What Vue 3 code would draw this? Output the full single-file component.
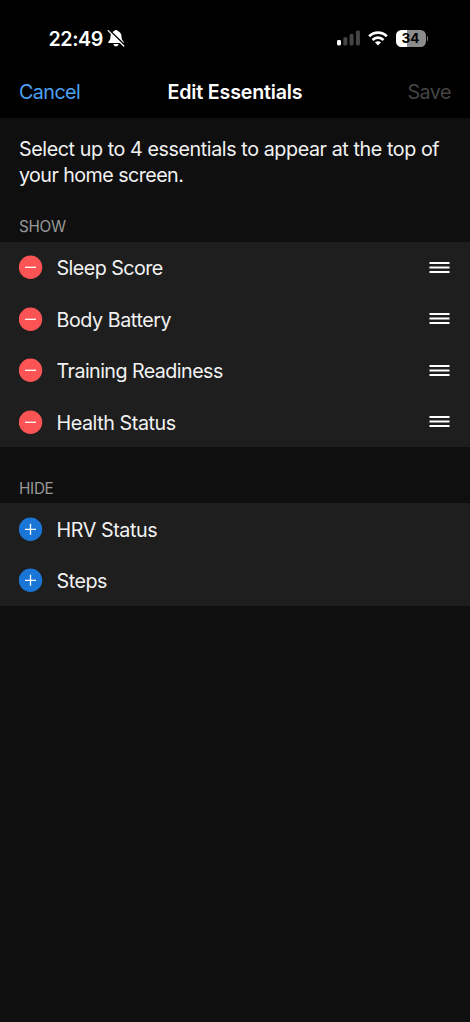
<script setup>
const shown = [
  { name: 'Sleep Score', tracking: -0.55 },
  { name: 'Body Battery', tracking: -0.43 },
  { name: 'Training Readiness', tracking: -0.56 },
  { name: 'Health Status', tracking: -0.42 },
]
const hidden = [
  { name: 'HRV Status', tracking: -0.4 },
  { name: 'Steps', tracking: -0.45 },
]
</script>

<template>
  <div class="screen">
    <header class="top">
      <div class="status">
        <div class="clock">
          <span class="time">22:49</span>
          <svg class="bell" width="18" height="18" viewBox="0 0 18 18">
            <path d="M9 .9c-.9 0-1.500.5-1.700 1.200C4.900 2.900 3.600 4.800 3.500 7.300c-.1 3-.7 3.900-1.900 5.100-.7.8-.4 1.700.6 1.700h13.600c1 0 1.300-.9.6-1.700-1.200-1.200-1.800-2.100-1.900-5.100-.1-2.500-1.400-4.400-3.800-5.200C10.500 1.400 9.900.9 9 .9z" fill="#fff" />
            <path d="M6.400 14.900h5.200c-.2 1.500-1.300 2.400-2.600 2.400s-2.400-.9-2.600-2.400z" fill="#fff" />
            <path d="M2.600 1.200L17.200 15.600" stroke="#000" stroke-width="1.500" />
            <path d="M1.200 1.600L16.800 17" stroke="#fff" stroke-width="1.300" stroke-linecap="round" />
          </svg>
        </div>
        <div class="indicators">
          <svg width="23" height="16" viewBox="0 0 23 16">
            <rect x="0" y="10" width="4" height="5.500" rx="1.400" fill="#fff" />
            <rect x="6.300" y="7.300" width="4" height="8.200" rx="1.400" fill="#444" />
            <rect x="12.600" y="4" width="4" height="11.500" rx="1.400" fill="#444" />
            <rect x="18.900" y="0.500" width="4" height="15" rx="1.400" fill="#444" />
          </svg>
          <svg class="wifi" width="20" height="15" viewBox="0 0 20 15">
            <g fill="none" stroke="#fff" stroke-width="2.700">
              <path d="M1.200 5.300C6.200.4 13.800.4 18.800 5.300" />
              <path d="M4.500 8.900C7.700 5.900 12.300 5.900 15.500 8.900" />
            </g>
            <path d="M10 14.400l-3.100-3.100c1.700-1.500 4.500-1.500 6.200 0z" fill="#fff" />
          </svg>
          <div class="battery"><span class="level">34</span></div>
          <i class="cap"></i>
        </div>
      </div>
      <nav class="nav">
        <span class="cancel">Cancel</span>
        <span class="title">Edit Essentials</span>
        <span class="save">Save</span>
      </nav>
    </header>

    <p class="intro">Select up to 4 essentials to appear at the top of<br /><span class="second">your home screen.</span></p>

    <h2 class="label show">SHOW</h2>
    <ul class="list">
      <li v-for="item in shown" :key="item.name" class="row">
        <svg class="dot" width="24" height="24" viewBox="0 0 24 24">
          <circle cx="11.500" cy="12.200" r="11.700" fill="#fc5454" />
          <path d="M6 12.300h11" stroke="#fff" stroke-width="1.300" />
        </svg>
        <span class="name" :style="{ letterSpacing: item.tracking + 'px' }">{{ item.name }}</span>
        <svg class="grip" width="21" height="13" viewBox="0 0 21 13">
          <path d="M.5 2h20M.5 6.500h20M.5 11h20" stroke="#fff" stroke-width="2.100" />
        </svg>
      </li>
    </ul>

    <h2 class="label hide">HIDE</h2>
    <ul class="list">
      <li v-for="item in hidden" :key="item.name" class="row">
        <svg class="dot" width="24" height="24" viewBox="0 0 24 24">
          <circle cx="11.500" cy="12.200" r="11.700" fill="#1976d7" />
          <path d="M6 12.300h11M11.500 6.800v11" stroke="#fff" stroke-width="1.300" />
        </svg>
        <span class="name" :style="{ letterSpacing: item.tracking + 'px' }">{{ item.name }}</span>
      </li>
    </ul>
  </div>
</template>

<style>
body {
  margin: 0;
  background: #0f0f0f;
}
</style>

<style scoped>
.screen {
  box-sizing: border-box;
  width: 470px;
  height: 1022px;
  overflow: hidden;
  background: #0f0f0f;
  color: #f2f2f2;
  font-family: Inter, "Liberation Sans", sans-serif;
  font-size: 19.700px;
}
.top {
  height: 117.500px;
  background: #000;
}
.status {
  box-sizing: border-box;
  height: 68px;
  padding: 8px 42px 0 48.500px;
  display: flex;
  align-items: center;
  justify-content: space-between;
}
.clock,
.indicators {
  display: flex;
  align-items: center;
}
.time {
  padding-top: 1px;
  font-size: 19.700px;
  font-weight: 600;
  letter-spacing: -0.4px;
  color: #fff;
}
.bell {
  margin-left: 4px;
}
.wifi {
  margin-left: 8px;
}
.battery {
  width: 30px;
  height: 17px;
  margin-left: 8px;
  border-radius: 5.500px;
  background: linear-gradient(90deg, #fff 36%, #8c8c8c 36%);
  display: flex;
  align-items: center;
  justify-content: center;
}
.level {
  font-size: 13.500px;
  line-height: 17px;
  font-weight: 700;
  color: #000;
}
.cap {
  width: 1.500px;
  height: 5px;
  margin-left: 1px;
  border-radius: 0 2px 2px 0;
  background: #777;
}
.nav {
  height: 48px;
  padding: 0 19px;
  display: grid;
  grid-template-columns: 1fr auto 1fr;
  align-items: center;
}
.cancel {
  color: #4ba3f5;
  letter-spacing: -0.55px;
}
.title {
  color: #fff;
  font-weight: 600;
  letter-spacing: -0.2px;
}
.save {
  color: #444;
  text-align: right;
  letter-spacing: -0.5px;
}
.intro {
  margin: 0;
  padding: 18px 19px 0;
  height: 52px;
  line-height: 26px;
  letter-spacing: -0.41px;
  white-space: nowrap;
}
.second {
  letter-spacing: -0.56px;
}
.label {
  margin: 0;
  padding-left: 19px;
  font-size: 15.300px;
  font-weight: 400;
  line-height: 20px;
  letter-spacing: -0.3px;
  color: #999;
}
.show {
  padding-top: 29.500px;
  height: 24.500px;
}
.hide {
  padding-top: 31.500px;
  height: 24.500px;
}
.list {
  margin: 0;
  padding: 0;
  list-style: none;
  background: #1e1e1e;
}
.row {
  height: 51.450px;
  padding: 0 20px 0 19px;
  display: flex;
  align-items: center;
}
.name {
  margin-left: 13.500px;
  padding-top: 2px;
}
.grip {
  margin-left: auto;
}
</style>
